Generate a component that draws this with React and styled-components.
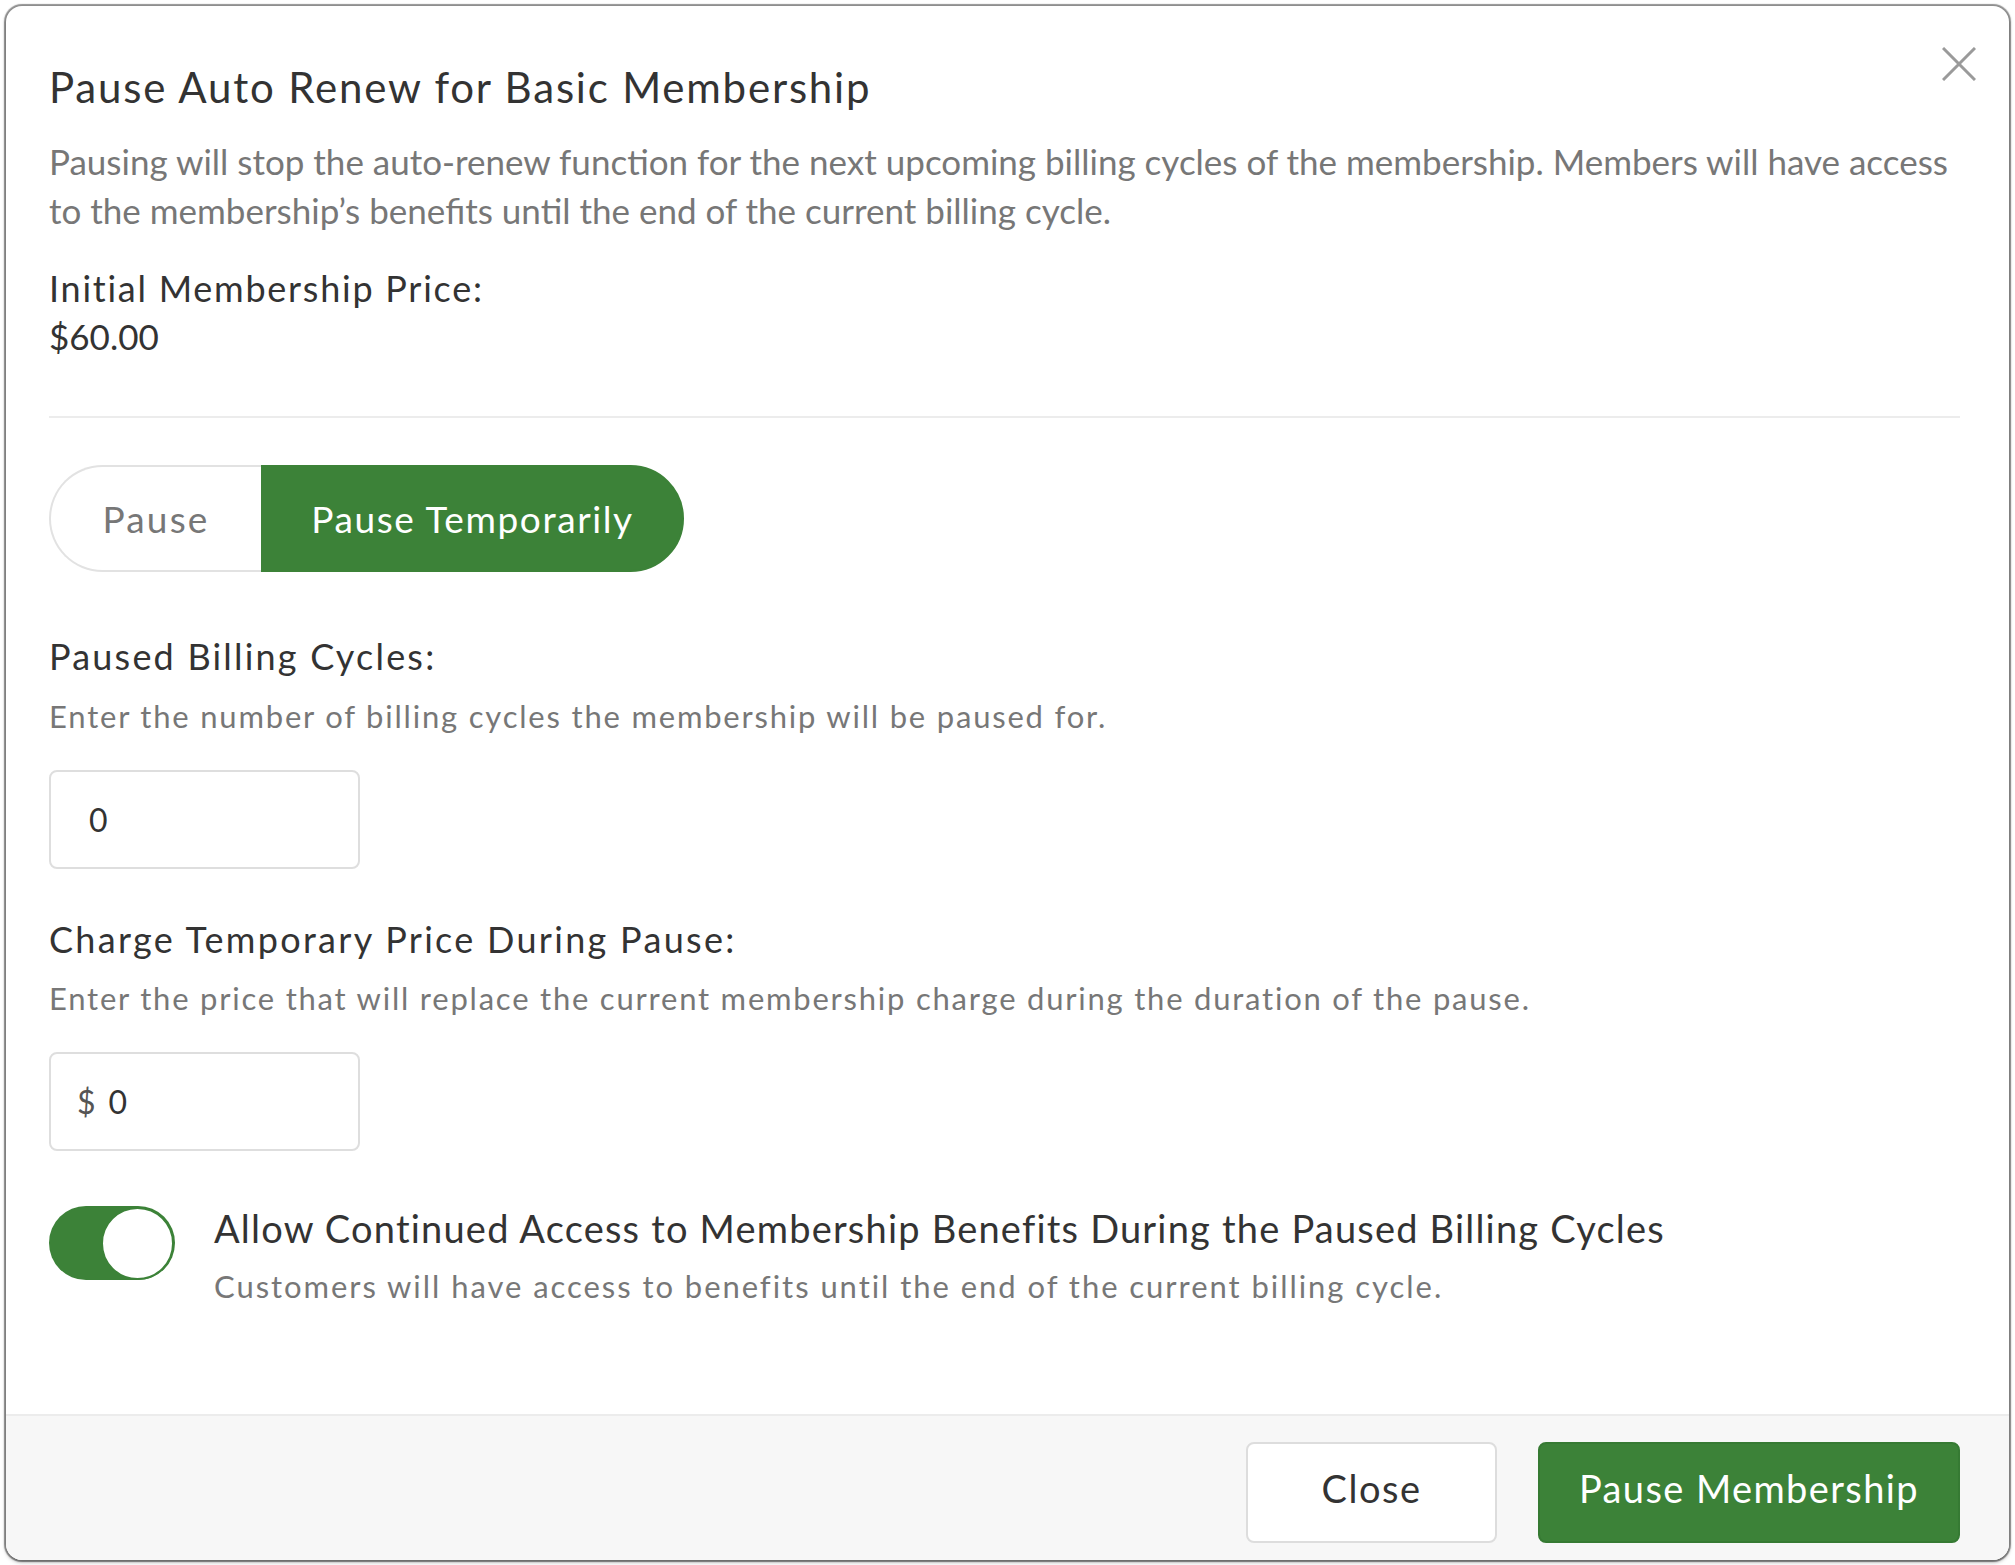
import React from 'react';
import styled, { createGlobalStyle } from 'styled-components';

const GlobalStyle = createGlobalStyle`
  html, body { margin: 0; padding: 0; background: #ffffff; }
  body { font-family: Lato, "Open Sans", sans-serif; color: #333; }
  * { box-sizing: border-box; }
`;

const GREEN = '#3c8238';

const Page = styled.div`
  padding: 6px 6px 7px 6px;
`;

const Dialog = styled.div`
  position: relative;
  background: #fff;
  border-radius: 16px;
  overflow: hidden;
  box-shadow: 0 0 1px 2px rgba(0, 0, 0, 0.42), 0 2px 4px rgba(0, 0, 0, 0.35);
`;

const Body = styled.div`
  padding: 56px 49px 106px 43px;
  display: flex;
  flex-direction: column;
  align-items: flex-start;
`;

const CloseIcon = styled.button`
  position: absolute;
  top: 40px;
  right: 32px;
  width: 36px;
  height: 36px;
  padding: 0;
  border: none;
  background: transparent;
  display: flex;
  align-items: center;
  justify-content: center;
`;

const Title = styled.h2`
  margin: 0;
  font-size: 42px;
  line-height: 50px;
  font-weight: 400;
  letter-spacing: 1.8px;
  color: #333;
`;

const Description = styled.p`
  margin: ${(p) => p.$mt || 0}px 0 0;
  font-size: ${(p) => p.$size || 35}px;
  line-height: ${(p) => p.$lh || 49}px;
  letter-spacing: ${(p) => p.$ls || 0}px;
  color: #777;
`;

const Label = styled.div`
  margin-top: ${(p) => p.$mt || 0}px;
  font-size: 36px;
  line-height: 48px;
  letter-spacing: ${(p) => p.$ls || 0}px;
  color: #333;
`;

const Value = styled.div`
  font-size: 35px;
  line-height: 48px;
  color: #333;
`;

const Divider = styled.hr`
  align-self: stretch;
  margin: 56px 0 0;
  height: 2px;
  border: none;
  background: #ececec;
`;

const Segmented = styled.div`
  margin-top: 47px;
  display: flex;
  height: 107px;
`;

const Segment = styled.button`
  height: 100%;
  width: ${(p) => p.$w}px;
  font-family: inherit;
  font-size: 37px;
  padding: 0;
  cursor: pointer;
  letter-spacing: ${(p) => (p.$active ? 1.6 : 2.2)}px;
  border: 2px solid ${(p) => (p.$active ? GREEN : '#e2e2e2')};
  background: ${(p) => (p.$active ? GREEN : '#fff')};
  color: ${(p) => (p.$active ? '#fff' : '#777')};
  border-radius: ${(p) => (p.$first ? '54px 0 0 54px' : '0 54px 54px 0')};
  ${(p) => (p.$first ? 'border-right: none;' : '')}
`;

const Input = styled.div`
  margin-top: 32px;
  width: 311px;
  height: 99px;
  border: 2px solid #dedede;
  border-radius: 8px;
  display: flex;
  align-items: center;
  padding-left: ${(p) => p.$pl}px;
  font-size: 32px;
  color: #333;
  gap: 13px;
`;

const Prefix = styled.span`
  color: #555;
`;

const ToggleRow = styled.div`
  margin-top: 55px;
  display: flex;
  align-items: flex-start;
  gap: 39px;
`;

const Toggle = styled.div`
  flex: none;
  width: 126px;
  height: 74px;
  border-radius: 37px;
  background: ${GREEN};
  display: flex;
  align-items: center;
  justify-content: flex-end;
  padding-right: 1px;
`;

const Knob = styled.div`
  width: 73px;
  height: 73px;
  border-radius: 50%;
  background: #fff;
  border: 2px solid ${GREEN};
`;

const ToggleText = styled.div`
  display: flex;
  flex-direction: column;
  margin-top: -3px;
`;

const ToggleLabel = styled.div`
  font-size: 38px;
  line-height: 50px;
  letter-spacing: 1.2px;
  color: #333;
`;

const Footer = styled.div`
  border-top: 2px solid #ececec;
  background: #f7f7f7;
  padding: 26px 49px 17px;
  display: flex;
  justify-content: flex-end;
  gap: 41px;
`;

const Button = styled.button`
  height: 101px;
  width: ${(p) => p.$w}px;
  padding: 0 0 10px;
  border-radius: 8px;
  font-family: inherit;
  font-size: 38px;
  letter-spacing: ${(p) => (p.$primary ? 1.4 : 1.5)}px;
  cursor: pointer;
  border: 2px solid ${(p) => (p.$primary ? '#367a33' : '#dddddd')};
  background: ${(p) => (p.$primary ? GREEN : '#fff')};
  color: ${(p) => (p.$primary ? '#fff' : '#333')};
`;

export default function App() {
  return (
    <>
      <GlobalStyle />
      <Page>
        <Dialog>
          <CloseIcon aria-label="Close">
            <svg width="34" height="34" viewBox="0 0 34 34">
              <path d="M1 1 L33 33 M33 1 L1 33" stroke="#9a9a9a" strokeWidth="3" />
            </svg>
          </CloseIcon>
          <Body>
            <Title>Pause Auto Renew for Basic Membership</Title>
            <Description $mt={25}>
              Pausing will stop the auto-renew function for the next upcoming billing cycles of the membership. Members will have access
              <br />
              to the membership’s benefits until the end of the current billing cycle.
            </Description>
            <Label $mt={29} $ls={1.75}>Initial Membership Price:</Label>
            <Value>$60.00</Value>
            <Divider />
            <Segmented>
              <Segment $first $w={212}>Pause</Segment>
              <Segment $active $w={423}>Pause Temporarily</Segment>
            </Segmented>

            <Label $mt={60} $ls={2.2}>Paused Billing Cycles:</Label>
            <Description $mt={14} $size={31} $lh={44} $ls={1.8}>
              Enter the number of billing cycles the membership will be paused for.
            </Description>
            <Input $pl={38}>0</Input>

            <Label $mt={46} $ls={2.3}>Charge Temporary Price During Pause:</Label>
            <Description $mt={13} $size={31} $lh={44} $ls={1.78}>
              Enter the price that will replace the current membership charge during the duration of the pause.
            </Description>
            <Input $pl={26}>
              <Prefix>$</Prefix>0
            </Input>

            <ToggleRow>
              <Toggle>
                <Knob />
              </Toggle>
              <ToggleText>
                <ToggleLabel>Allow Continued Access to Membership Benefits During the Paused Billing Cycles</ToggleLabel>
                <Description $mt={11} $size={31} $lh={44} $ls={1.95}>
                  Customers will have access to benefits until the end of the current billing cycle.
                </Description>
              </ToggleText>
            </ToggleRow>
          </Body>
          <Footer>
            <Button $w={251}>Close</Button>
            <Button $primary $w={422}>Pause Membership</Button>
          </Footer>
        </Dialog>
      </Page>
    </>
  );
}
